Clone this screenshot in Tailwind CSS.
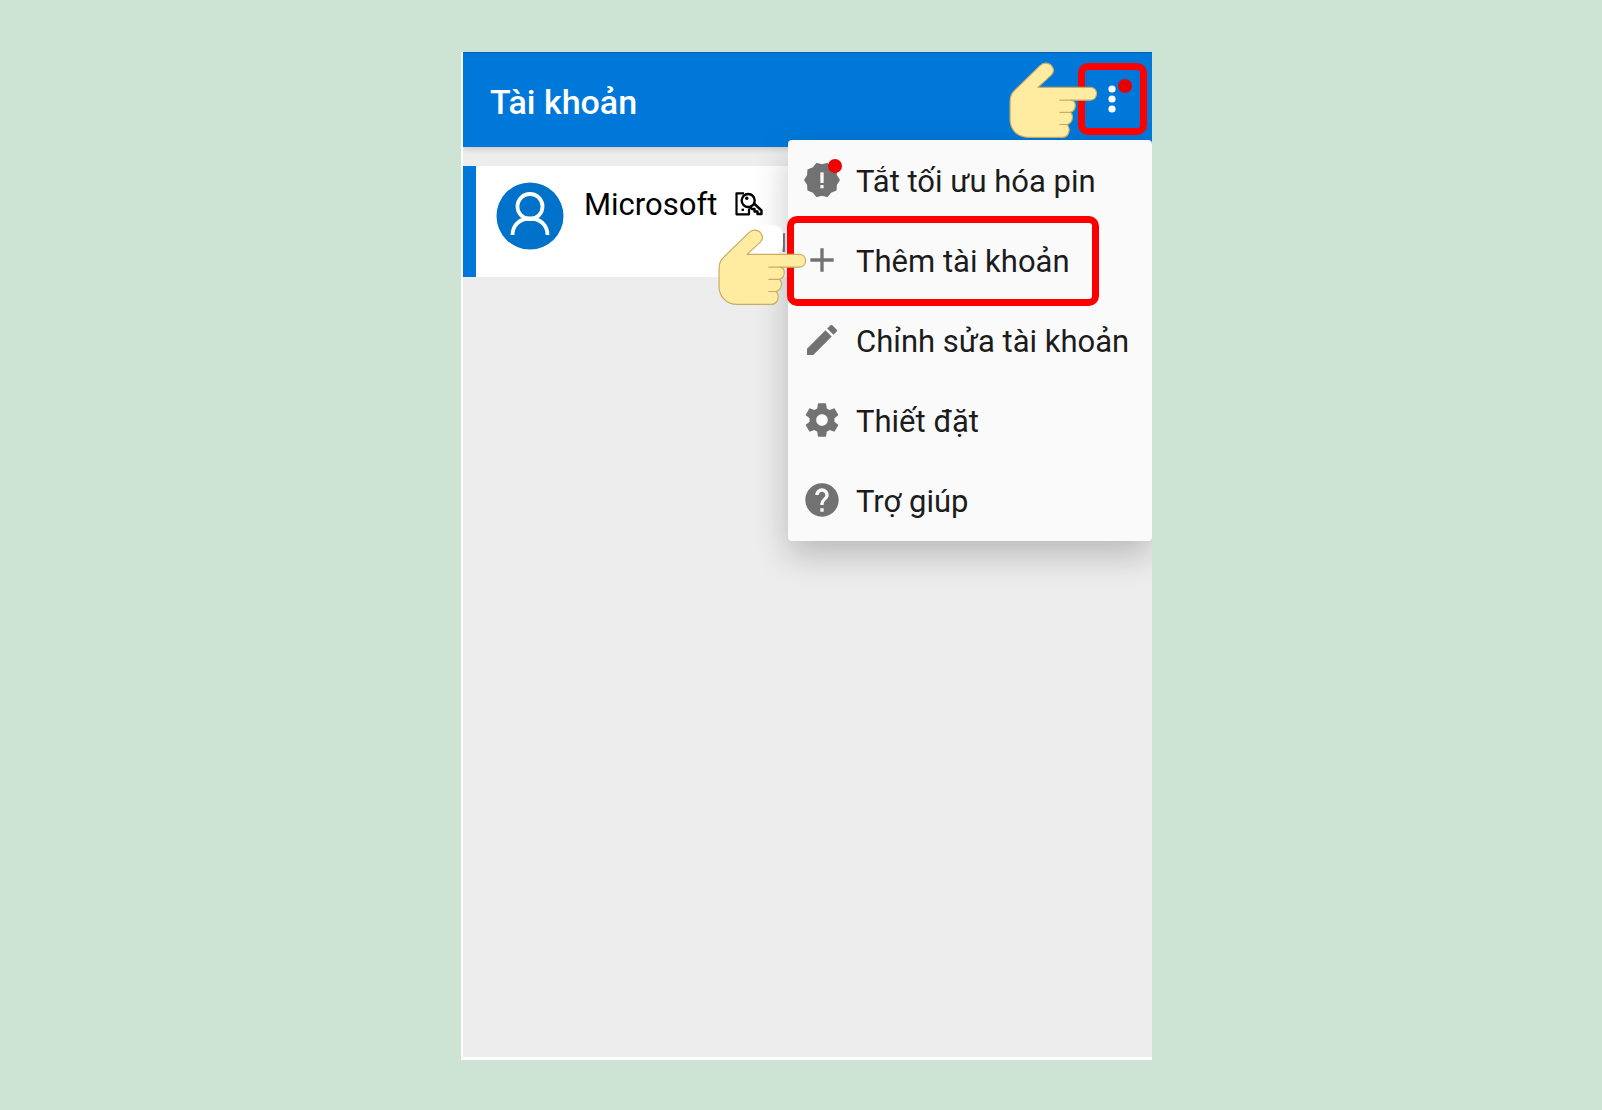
<!DOCTYPE html>
<html lang="vi">
<head>
<meta charset="utf-8">
<meta name="viewport" content="width=device-width, initial-scale=1">
<title>Tài khoản</title>
<script src="https://cdn.jsdelivr.net/npm/@tailwindcss/browser@4"></script>
</head>
<body class="flex min-h-screen flex-col items-center bg-[#cde3d4] pt-[52px] pb-[50px] pl-[11px] font-['Roboto',sans-serif]">
<svg class="hidden" aria-hidden="true">
  <symbol id="hand" viewBox="54 87 270 234">
    <path d="M57 207C57 186 65 179 75 169L148 98C158 88 172 88 182 97C191 107 190 118 183 126L142 164H300C312 164 320 172 320 183C320 195 312 203 300 203H244C251 205 256 212 255 222C254 232 248 238 240 240C246 244 248 251 246 260C244 270 239 275 230 277C236 282 238 289 236 299C233 311 227 316 216 316H112C80 316 57 293 57 262Z" fill="#ffeca0" stroke="#c9ab62" stroke-width="3.5" stroke-linejoin="round"/>
    <path d="M207 203H246M207 240H241M207 277H231" fill="none" stroke="#c9ab62" stroke-width="3.5"/>
  </symbol>
</svg>

<div class="relative flex w-full max-w-[691px] flex-1 flex-col overflow-hidden border-b-3 border-l-2 border-white bg-[#ededed]">
  <header class="relative flex h-[95px] items-center justify-between border-t border-[#0a63b0] bg-[#0078d9] pr-[5px] pl-[27px] shadow-[0_2px_6px_rgba(0,0,0,0.16)]">
    <h1 class="pt-1 text-[34px] leading-10 font-medium text-white">Tài khoản</h1>
    <button type="button" aria-label="Tùy chọn khác" class="relative z-20 mb-[2px] flex h-[72px] w-[69px] items-center justify-center rounded-[10px] border-7 border-[#ff0000]">
      <svg class="h-7 w-3" viewBox="0 0 12 28" fill="#fff"><circle cx="5" cy="4" r="3.6"/><circle cx="5" cy="14" r="3.6"/><circle cx="5" cy="24" r="3.6"/></svg>
      <span class="absolute top-[9px] right-2 size-[14px] rounded-full bg-[#e60000]"></span>
    </button>
    <svg class="absolute top-[9px] right-[54px] z-20 h-[77px] w-[89px]" aria-hidden="true"><use href="#hand"/></svg>
  </header>

  <main class="flex-1 pt-[19px]">
    <a href="#" class="relative flex h-[111px] gap-5 border-l-13 border-[#0078d9] bg-white py-4 pl-5">
      <svg class="size-[68px]" viewBox="0 0 68 68" aria-hidden="true">
        <circle cx="34" cy="34" r="33.5" fill="#0072c9"/>
        <g fill="none" stroke="#fff" stroke-width="3.8"><circle cx="34" cy="24.500" r="12.500"/><path d="M16.500 53C16.500 43 24 36.500 34 36.500S51.500 43 51.500 53"/></g>
      </svg>
      <span class="flex h-11 items-center gap-[18px] text-[31px] leading-9 text-black"><span class="pt-[2px]">Microsoft</span>
        <svg class="h-6 w-7" viewBox="0 0 28 24" fill="none" stroke="#000" stroke-width="2.2" stroke-linejoin="round" aria-hidden="true">
          <path d="M9 1.300H1.500V22.300H14V16.500"/><path d="M6.500 17.800H9"/>
          <circle cx="13.200" cy="8.500" r="6.500" fill="#fff" stroke-width="2.400"/><circle cx="11.800" cy="6.300" r="1.700" fill="#000" stroke="none"/>
          <path d="M18.500 11L26.500 18.500V22H22.500V19.500H19.500V17H17L14.500 14.800" stroke-width="2.400"/>
        </svg>
      </span>
      <span class="absolute top-[64px] left-[300px] text-[25px] leading-7 text-[#757575]">1</span>
    </a>
  </main>

  <div role="menu" class="absolute top-[88px] right-0 z-10 flex w-[364px] flex-col rounded-[4px] bg-[#fafafa] pb-px text-[31px] leading-9 text-[#1c1c1c] shadow-[0_14px_34px_rgba(0,0,0,0.22)]">
    <button type="button" role="menuitem" class="relative flex h-20 items-center gap-[14px] pl-[14px]">
      <svg class="size-10" viewBox="-12 -12 24 24" aria-hidden="true">
        <path d="M10.200 0L8.460 2.750L8.250 6L5.230 7.200L3.150 9.700L0 8.900L-3.150 9.700L-5.230 7.200L-8.250 6L-8.460 2.750L-10.200 0L-8.460 -2.750L-8.250 -6L-5.230 -7.200L-3.150 -9.700L0 -8.900L3.150 -9.700L5.230 -7.200L8.250 -6L8.460 -2.750Z" fill="#727272" stroke="#727272" stroke-linejoin="round"/>
        <g fill="#fafafa"><rect x="-1" y="-4.600" width="2" height="6.400" rx=".5"/><rect x="-1" y="3" width="2" height="2" rx=".4"/></g>
      </svg>
      <span class="pt-1">Tắt tối ưu hóa pin</span>
      <span class="absolute top-[19px] left-10 size-[14px] rounded-full bg-[#f00000]"></span>
    </button>
    <button type="button" role="menuitem" class="relative flex h-20 items-center gap-[14px] pl-[14px]">
      <svg class="size-10" viewBox="0 0 24 24" fill="#727272" aria-hidden="true"><path d="M19 13h-6v6h-2v-6H5v-2h6V5h2v6h6v2z"/></svg>
      <span class="pt-1">Thêm tài khoản</span>
      <span class="absolute -top-1 -left-px h-[90px] w-[312px] rounded-[10px] border-7 border-[#ff0000]"></span>
    </button>
    <button type="button" role="menuitem" class="flex h-20 items-center gap-[14px] pl-[14px]">
      <svg class="size-10" viewBox="0 0 24 24" fill="#727272" aria-hidden="true"><path d="M3 17.250V21h3.750L17.810 9.940l-3.750-3.750L3 17.250zM20.710 7.040c.39-.39.39-1.020 0-1.410l-2.340-2.340c-.39-.39-1.020-.39-1.410 0l-1.830 1.830 3.750 3.750 1.830-1.830z"/></svg>
      <span class="pt-1">Chỉnh sửa tài khoản</span>
    </button>
    <button type="button" role="menuitem" class="flex h-20 items-center gap-[14px] pl-[14px]">
      <svg class="size-10" viewBox="0 0 24 24" fill="#727272" aria-hidden="true"><path d="M19.430 12.980c.04-.32.07-.64.07-.98s-.03-.66-.07-.98l2.110-1.650c.19-.15.24-.42.12-.64l-2-3.460c-.12-.22-.39-.3-.61-.22l-2.490 1c-.52-.4-1.080-.73-1.690-.98l-.38-2.650C14.460 2.180 14.250 2 14 2h-4c-.25 0-.46.18-.49.42l-.38 2.650c-.61.25-1.170.59-1.690.98l-2.490-1c-.23-.09-.49 0-.61.22l-2 3.460c-.13.22-.07.49.12.64l2.110 1.650c-.04.32-.07.65-.07.98s.03.66.07.98l-2.110 1.650c-.19.15-.24.42-.12.64l2 3.460c.12.22.39.3.61.22l2.490-1c.52.4 1.080.73 1.690.98l.38 2.650c.03.24.24.42.49.42h4c.25 0 .46-.18.49-.42l.38-2.650c.61-.25 1.170-.59 1.690-.98l2.490 1c.23.09.49 0 .61-.22l2-3.460c.12-.22.07-.49-.12-.64l-2.110-1.650zM12 15.500c-1.930 0-3.500-1.570-3.500-3.500s1.570-3.500 3.500-3.500 3.500 1.570 3.500 3.500-1.570 3.500-3.500 3.500z"/></svg>
      <span class="pt-1">Thiết đặt</span>
    </button>
    <button type="button" role="menuitem" class="flex h-20 items-center gap-[14px] pl-[14px]">
      <svg class="size-10" viewBox="0 0 24 24" fill="#727272" aria-hidden="true"><path d="M12 2C6.480 2 2 6.480 2 12s4.480 10 10 10 10-4.480 10-10S17.520 2 12 2zm1 17h-2v-2h2v2zm2.070-7.750l-.9.920C13.450 12.900 13 13.500 13 15h-2v-.5c0-1.100.45-2.100 1.170-2.830l1.240-1.260c.37-.36.59-.86.59-1.410 0-1.100-.9-2-2-2s-2 .9-2 2H8c0-2.210 1.790-4 4-4s4 1.790 4 4c0 .88-.36 1.680-.93 2.250z"/></svg>
      <span class="pt-1">Trợ giúp</span>
    </button>
    <span class="absolute top-[85px] -left-[45px] -z-10 h-[30px] w-10 rounded-[10px] bg-white"></span>
    <svg class="absolute top-[89px] -left-[70px] h-[77px] w-[89px]" aria-hidden="true"><use href="#hand"/></svg>
  </div>
</div>
</body>
</html>
